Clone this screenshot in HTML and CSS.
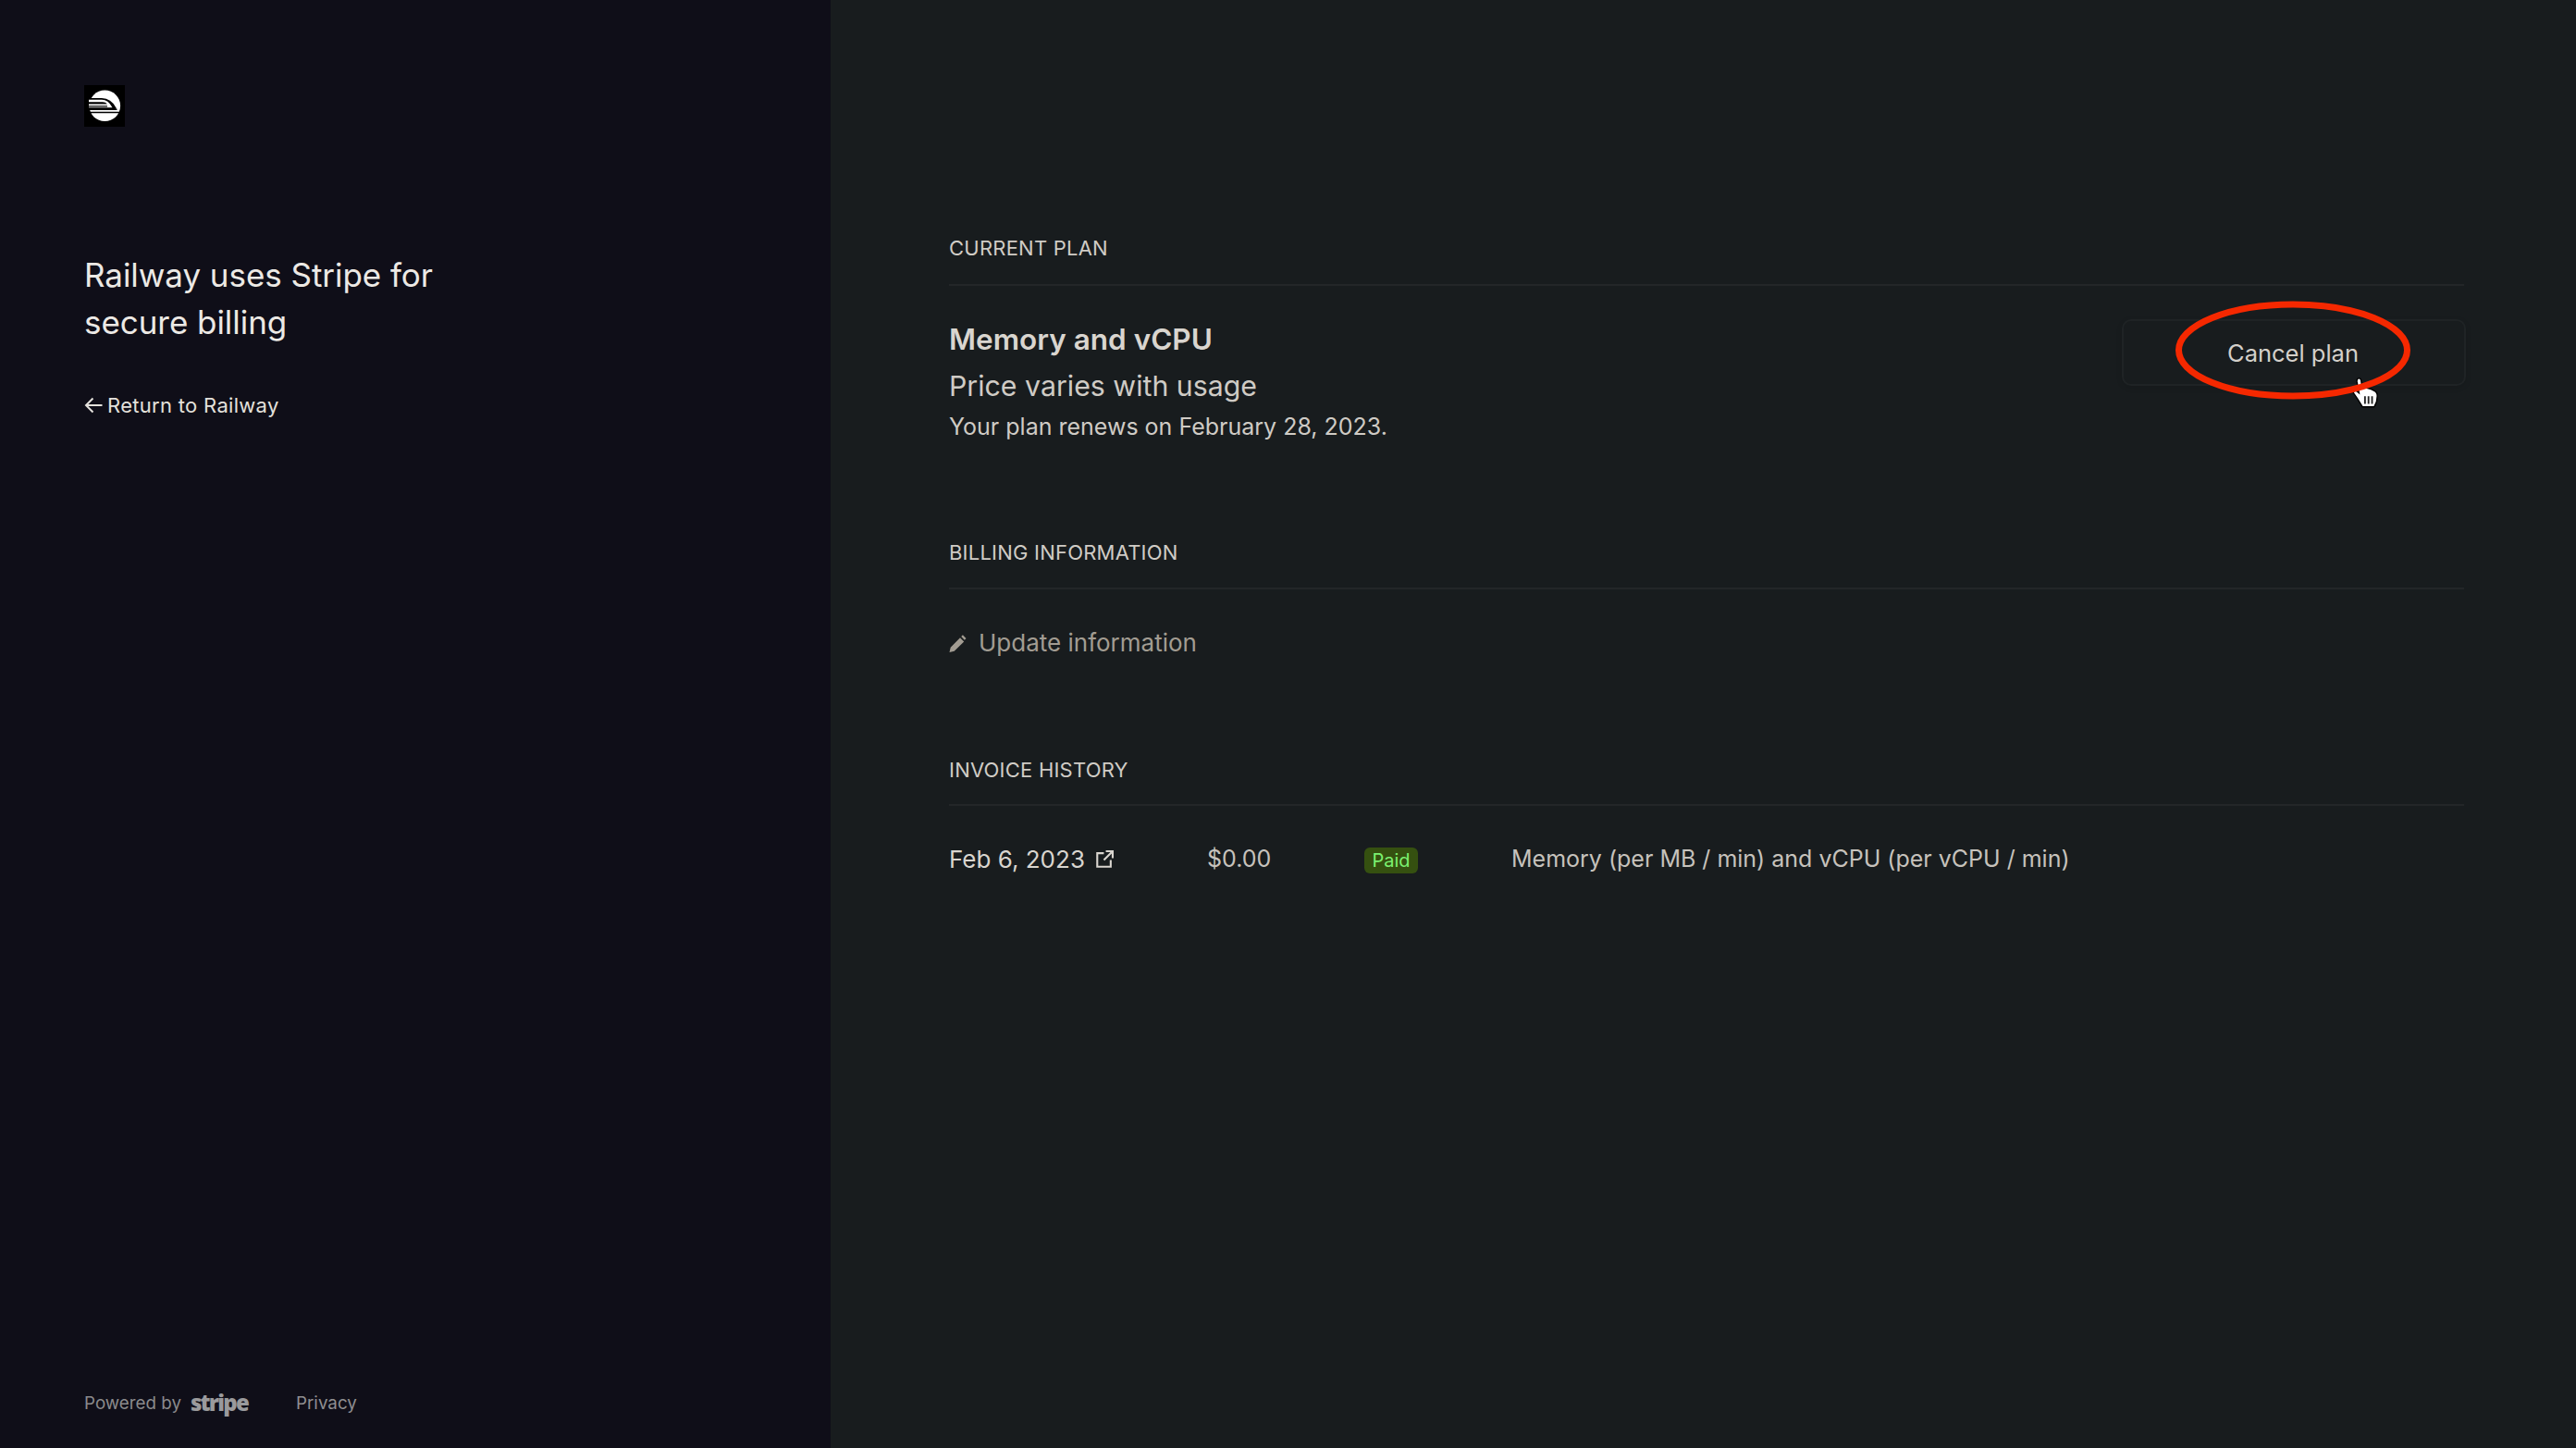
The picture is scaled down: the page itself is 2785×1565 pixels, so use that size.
FILE: index.html
```html
<!DOCTYPE html>
<html lang="en">
<head>
<meta charset="utf-8">
<title>Billing</title>
<link rel="stylesheet" href="styles.css">
</head>
<body>
<div class="page">
  <aside class="side">
    <div class="side-top">
      <svg class="logo" viewBox="0 0 44 45" aria-label="Railway">
        <rect width="44" height="45" fill="#000"/>
        <circle cx="22.300" cy="22.300" r="16.800" fill="#fff"/>
        <path d="M5 14h14q10 0 15.500 10.500V26H5z" fill="#000"/>
        <path d="M5 15.800h14q7 0 11.500 8.400H5z" fill="#fff"/>
        <path d="M5 18.200h15q3 0 5 2.200H5zM5 22.200h20v1.200H5z" fill="#000"/>
        <path d="M4.500 25.500h31v1.500h-31zM4.500 28.800h35v1.500h-35z" fill="#000"/>
      </svg>
      <h1 class="headline">Railway uses Stripe for<br>secure billing</h1>
      <a class="back"><svg class="back-icon" viewBox="0 0 20 20"><path d="M19.500 10H2M9.500 2.500 2 10l7.500 7.500" fill="none" stroke="currentColor" stroke-width="2"/></svg>Return to Railway</a>
    </div>
    <footer class="side-foot">
      <span class="powered">Powered by</span>
      <span class="stripe">stripe</span>
      <span class="privacy">Privacy</span>
    </footer>
  </aside>
  <main class="main">
    <section class="section section-plan">
      <h2 class="label">CURRENT PLAN</h2>
      <div class="plan">
        <div class="plan-info">
          <div class="plan-name">Memory and vCPU</div>
          <div class="plan-price">Price varies with usage</div>
          <div class="plan-renew">Your plan renews on February 28, 2023.</div>
        </div>
        <div class="cancel-wrap">
          <button class="cancel">Cancel plan</button>
          <svg class="hand" viewBox="0 0 28 32">
            <path d="M5.500 1c1.500-.8 3 .2 3.200 2l1 7.500 2.500-.5 3 .6 3 .8 3.500 1.800c2 1 3 2.700 3 5 0 4-1 7.500-3 10.800H10L5 21 1.200 15.500c-.7-1.800 1-3.200 2.800-2.200l2.600 2L4.500 4c-.1-1 .2-2.400 1-3z" fill="#fff" stroke="#000" stroke-width="1.300"/>
            <path d="M12.500 18.500v7.500M16 18.500v7.500M19.500 18.500v7.500" stroke="#222" stroke-width="1.700"/>
          </svg>
          <svg class="ring" viewBox="0 0 260 113"><ellipse cx="130" cy="56.500" rx="123.500" ry="49.500" fill="none" stroke="#f52800" stroke-width="7"/></svg>
        </div>
      </div>
    </section>
    <section class="section section-billing">
      <h2 class="label">BILLING INFORMATION</h2>
      <a class="update"><svg class="pencil" viewBox="0 0 18 19"><path d="M0 19l1.200-5.200L11.500 3.200l4.200 4.200L5.200 17.800zM12.700 2l1.700-1.700 3.600 3.600-1.700 1.800z" fill="currentColor"/></svg>Update information</a>
    </section>
    <section class="section">
      <h2 class="label">INVOICE HISTORY</h2>
      <div class="invoice">
        <div class="inv-date">Feb 6, 2023<svg class="ext" viewBox="0 0 18 18"><path d="M8 3H1.200v13.800H15V10M10 1h7v7M17 1 8 10" fill="none" stroke="currentColor" stroke-width="2"/></svg></div>
        <div class="inv-amount">$0.00</div>
        <div class="inv-status"><span class="badge">Paid</span></div>
        <div class="inv-desc">Memory (per MB / min) and vCPU (per vCPU / min)</div>
      </div>
    </section>
  </main>
</div>
</body>
</html>
```
FILE: styles.css
```css
* { box-sizing: border-box; }
html, body { margin: 0; height: 100%; }
body {
  background: #181c1e;
  font-family: Inter, "Liberation Sans", sans-serif;
  color: #d9d5cf;
}
.page { display: flex; height: 1565px; overflow: hidden; }
.side {
  width: 898px;
  flex: none;
  background: #0f0e18;
  padding: 92px 0 0 91px;
  display: flex;
  flex-direction: column;
  justify-content: space-between;
}
.logo { display: block; width: 44px; height: 45px; }
.headline {
  margin: 135px 0 0;
  font-size: 35px;
  letter-spacing: -0.050px;
  line-height: 51px;
  font-weight: 400;
  color: #ece9e5;
}
.back {
  margin-top: 48px;
  display: flex;
  align-items: center;
  gap: 5px;
  font-size: 22px;
  letter-spacing: .3px;
  line-height: 32px;
  color: #e4e1dc;
}
.back-icon { width: 20px; height: 20px; }
.side-foot {
  display: flex;
  align-items: center;
  height: 32px;
  margin-bottom: 33px;
  color: #8a8a8c;
  font-size: 18.800px;
}
.powered { width: 115px; }
.stripe {
  width: 114px;
  font-family: "Open Sans", sans-serif;
  font-weight: 800;
  font-size: 24px;
  letter-spacing: -1.800px;
  color: #9a9a9c;
  line-height: 32px;
}
.main { flex: 1; padding: 250px 121px 0 128px; }
.section-plan { height: 330px; }
.section-billing { height: 234px; }
.label {
  margin: 0;
  font-size: 22px;
  letter-spacing: .22px;
  line-height: 36px;
  height: 57px;
  font-weight: 400;
  color: #d0ccc6;
  border-bottom: 2px solid #232628;
}
.section-plan .label { height: 59px; }
.section-billing .label { line-height: 34px; }
.plan { display: flex; justify-content: space-between; align-items: flex-start; padding-top: 36px; }
.plan-info { margin-top: -1px; }
.plan-name { font-size: 31.500px; line-height: 46px; font-weight: 600; color: #d9d5cf; }
.plan-price { font-size: 30.300px; line-height: 46px; margin-top: 4px; color: #cfcbc5; }
.plan-renew { font-size: 25px; line-height: 36px; margin-top: 3px; color: #cfcbc5; }
.cancel-wrap { position: relative; margin-right: -2px; }
.cancel {
  display: block;
  width: 372px;
  height: 72px;
  background: transparent;
  border: 2px solid #1f2325;
  border-radius: 10px;
  box-shadow: 0 2px 6px rgba(0,0,0,.12);
  font: 400 25.500px Inter, sans-serif;
  color: #d4d0ca;
  padding: 0 2px 0 0;
}
.ring { position: absolute; left: 55px; top: -23px; width: 260px; height: 113px; }
.hand { position: absolute; left: 249px; top: 63px; width: 31px; height: 35px; }
.update {
  display: flex;
  align-items: center;
  gap: 13px;
  margin-top: 40px;
  font-size: 26px;
  line-height: 36px;
  color: #a29c92;
}
.pencil { width: 19px; height: 19px; }
.invoice { display: flex; align-items: center; height: 36px; margin-top: 39px; font-size: 25px; }
.inv-date { width: 279px; display: flex; align-items: center; gap: 12px; color: #d9d5cf; font-size: 26px; }
.ext { width: 19px; height: 19px; }
.inv-amount { width: 170px; color: #c6c2bc; }
.inv-status { width: 159px; display: flex; padding-top: 3px; }
.badge {
  background: #355010;
  color: #7cf06f;
  font-size: 20px;
  line-height: 28px;
  width: 58px;
  text-align: center;
  border-radius: 6px;
}
.inv-desc { color: #c6c2bc; }
.privacy { color: #8f8f91; }
```
